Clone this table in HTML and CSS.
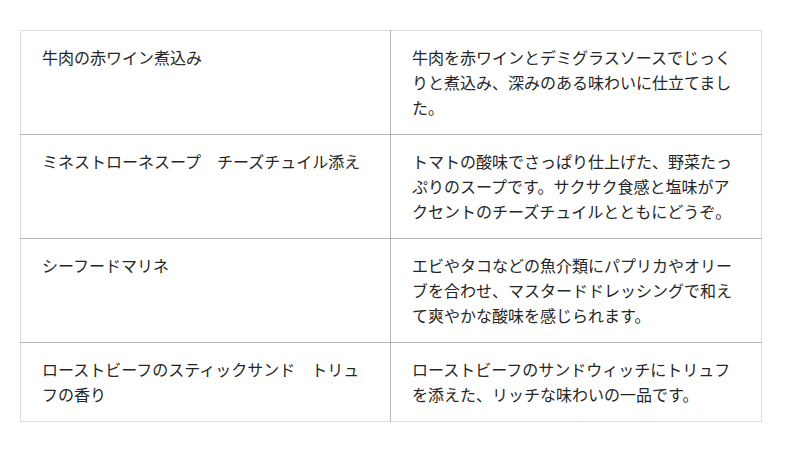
FILE: index.html
```html
<!DOCTYPE html>
<html lang="ja">
<head>
<meta charset="utf-8">
<link rel="stylesheet" href="styles.css">
</head>
<body>
<table class="menu">
  <colgroup>
    <col class="col-name">
    <col class="col-desc">
  </colgroup>
  <tr>
    <td class="name">牛肉の赤ワイン煮込み</td>
    <td class="desc">牛肉を赤ワインとデミグラスソースでじっくりと煮込み、深みのある味わいに仕立てました。</td>
  </tr>
  <tr>
    <td class="name">ミネストローネスープ　チーズチュイル添え</td>
    <td class="desc">トマトの酸味でさっぱり仕上げた、野菜たっぷりのスープです。サクサク食感と塩味がアクセントのチーズチュイルとともにどうぞ。</td>
  </tr>
  <tr>
    <td class="name">シーフードマリネ</td>
    <td class="desc">エビやタコなどの魚介類にパプリカやオリーブを合わせ、マスタードドレッシングで和えて爽やかな酸味を感じられます。</td>
  </tr>
  <tr>
    <td class="name">ローストビーフのスティックサンド　トリュフの香り</td>
    <td class="desc">ローストビーフのサンドウィッチにトリュフを添えた、リッチな味わいの一品です。</td>
  </tr>
</table>
</body>
</html>
```
FILE: styles.css
```css
html, body {
  margin: 0;
  padding: 0;
  background: #fff;
}
body {
  padding: 30px 0 0 20px;
  font-family: "Noto Sans CJK JP", "Noto Sans", sans-serif;
  color: #262626;
}
.menu {
  width: 742px;
  border-collapse: collapse;
  table-layout: fixed;
  border: 1px solid #dcdcdc;
}
.col-name {
  width: 370px;
}
.menu td {
  vertical-align: top;
  padding: 14px 20px 14px 21px;
  font-size: 16px;
  line-height: 25px;
}
.menu td + td {
  border-left: 1px solid #b8b8b8;
}
.menu tr + tr td {
  border-top: 1px solid #b8b8b8;
}
```
